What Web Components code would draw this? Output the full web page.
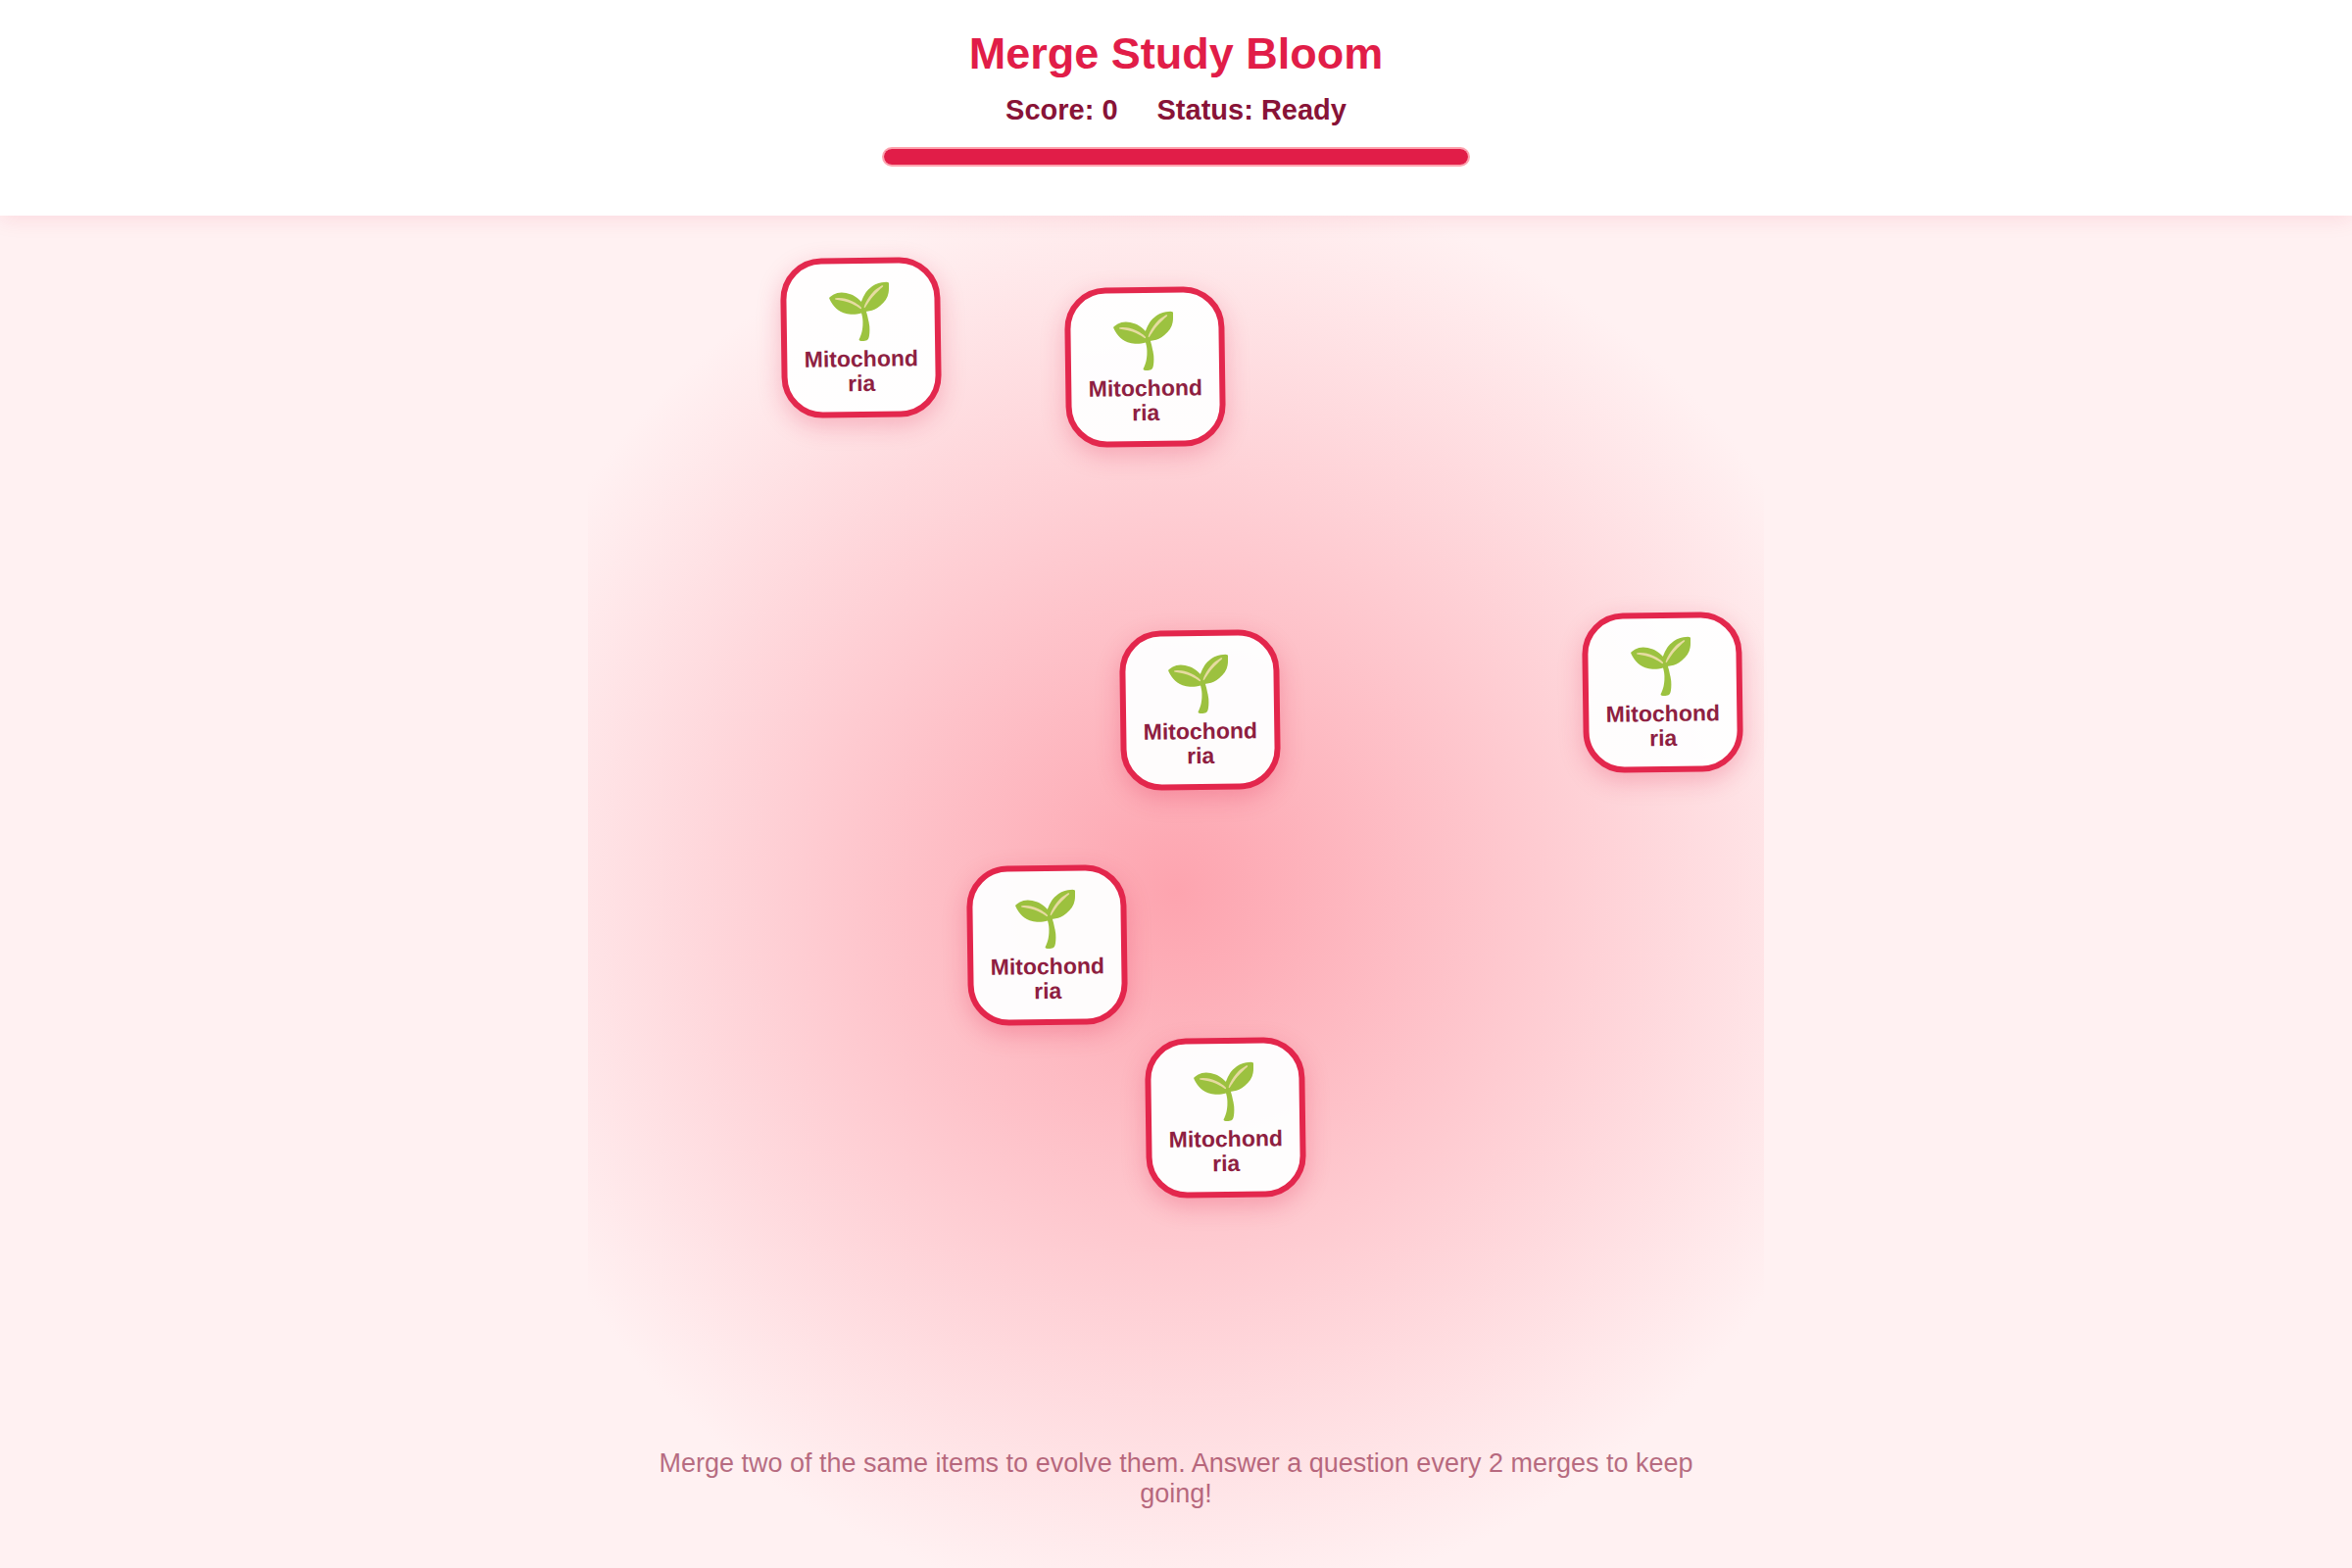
<!DOCTYPE html>
<html lang="en">
<head>
<meta charset="utf-8">
<title>Merge Study Bloom</title>
<style>
  html, body { height: 100%; }

  body {
    margin: 0;
    background: #fff1f2;
    font-family: 'Liberation Sans', Arial, sans-serif;
    color: #881337;
  }
</style>
</head>
<body>
<merge-game></merge-game>

<script>
class ScoreHeader extends HTMLElement {
  constructor() {
    super();
    this.attachShadow({ mode: 'open' }).innerHTML = `
      <style>
        :host {
          display: flex;
          flex-direction: column;
          align-items: center;
          box-sizing: border-box;
          padding: 29px 20px 50px;
          background: white;
          box-shadow: 0 4px 20px rgba(225, 29, 72, 0.1);
          z-index: 1;
        }

        h1 {
          margin: 0;
          font-size: 45px;
          line-height: 52px;
          color: #e11d48;
        }

        .stats {
          display: flex;
          gap: 40px;
          margin: 14px 0 21px;
          font-size: 29px;
          line-height: 34px;
          font-weight: bold;
        }

        .bar {
          box-sizing: border-box;
          width: 100%;
          max-width: 600px;
          height: 20px;
          border: 2px solid #fda4af;
          border-radius: 10px;
          background: #ffe4e6;
          overflow: hidden;
        }

        .fill {
          width: 100%;
          height: 100%;
          background: #e11d48;
        }
      </style>
      <h1><slot></slot></h1>
      <div class="stats">
        <div>Score: <span>${this.getAttribute('score')}</span></div>
        <div>Status: <span>${this.getAttribute('status')}</span></div>
      </div>
      <div class="bar" role="progressbar" aria-label="Time left" aria-valuenow="100"><div class="fill"></div></div>
    `;
  }
}

class MergeItem extends HTMLElement {
  constructor() {
    super();
    this.attachShadow({ mode: 'open' }).innerHTML = `
      <style>
        :host {
          position: absolute;
          display: flex;
          flex-direction: column;
          align-items: center;
          justify-content: center;
          gap: 4px;
          box-sizing: border-box;
          width: 163px;
          height: 163px;
          padding: 0 16px;
          border: 6px solid #e32249;
          border-radius: 42px;
          background: white;
          box-shadow: 0 8px 24px rgba(225, 29, 72, 0.25);
          opacity: 0.97;
          transform: rotate(-0.8deg);
          cursor: grab;
          user-select: none;
        }

        .icon {
          font-size: 56px;
          line-height: 64px;
          font-family: 'Noto Color Emoji', sans-serif;
        }

        .label {
          width: 100%;
          font-size: 23px;
          line-height: 25px;
          font-weight: bold;
          text-align: center;
          overflow-wrap: anywhere;
          opacity: 0.97;
        }
      </style>
      <div class="icon">🌱</div>
      <div class="label"><slot></slot></div>
    `;
  }
}

// top left corner of each item on the board
const ITEMS = [
  { name: 'Mitochondria', x: 197, y: 43 },
  { name: 'Mitochondria', x: 487, y: 73 },
  { name: 'Mitochondria', x: 543, y: 423 },
  { name: 'Mitochondria', x: 1015, y: 405 },
  { name: 'Mitochondria', x: 387, y: 663 },
  { name: 'Mitochondria', x: 569, y: 839 },
];

class MergeBoard extends HTMLElement {
  constructor() {
    super();
    this.attachShadow({ mode: 'open' }).innerHTML = `
      <style>
        :host {
          position: relative;
          display: flex;
          flex-direction: column;
          justify-content: flex-end;
          box-sizing: border-box;
          width: 100%;
          max-width: 1200px;
          margin: 0 auto;
          padding: 60px;
          background: radial-gradient(circle at center, #fda4af 0%, #fff1f2 80%);
        }

        p {
          margin: 0;
          font-size: 27px;
          line-height: 31px;
          text-align: center;
          opacity: 0.6;
        }
      </style>
      ${ITEMS.map((item) =>
        `<merge-item style="left: ${item.x}px; top: ${item.y}px">${item.name}</merge-item>`
      ).join('')}
      <p><slot></slot></p>
    `;
  }
}

class MergeGame extends HTMLElement {
  constructor() {
    super();
    this.attachShadow({ mode: 'open' }).innerHTML = `
      <style>
        :host {
          display: flex;
          flex-direction: column;
          min-height: 100%;
        }

        merge-board { flex: 1 }
      </style>
      <score-header score="0" status="Ready">Merge Study Bloom</score-header>
      <merge-board>Merge two of the same items to evolve them. Answer a question every 2 merges to keep going!</merge-board>
    `;
  }
}

customElements.define('score-header', ScoreHeader);
customElements.define('merge-item', MergeItem);
customElements.define('merge-board', MergeBoard);
customElements.define('merge-game', MergeGame);
</script>
</body>
</html>
